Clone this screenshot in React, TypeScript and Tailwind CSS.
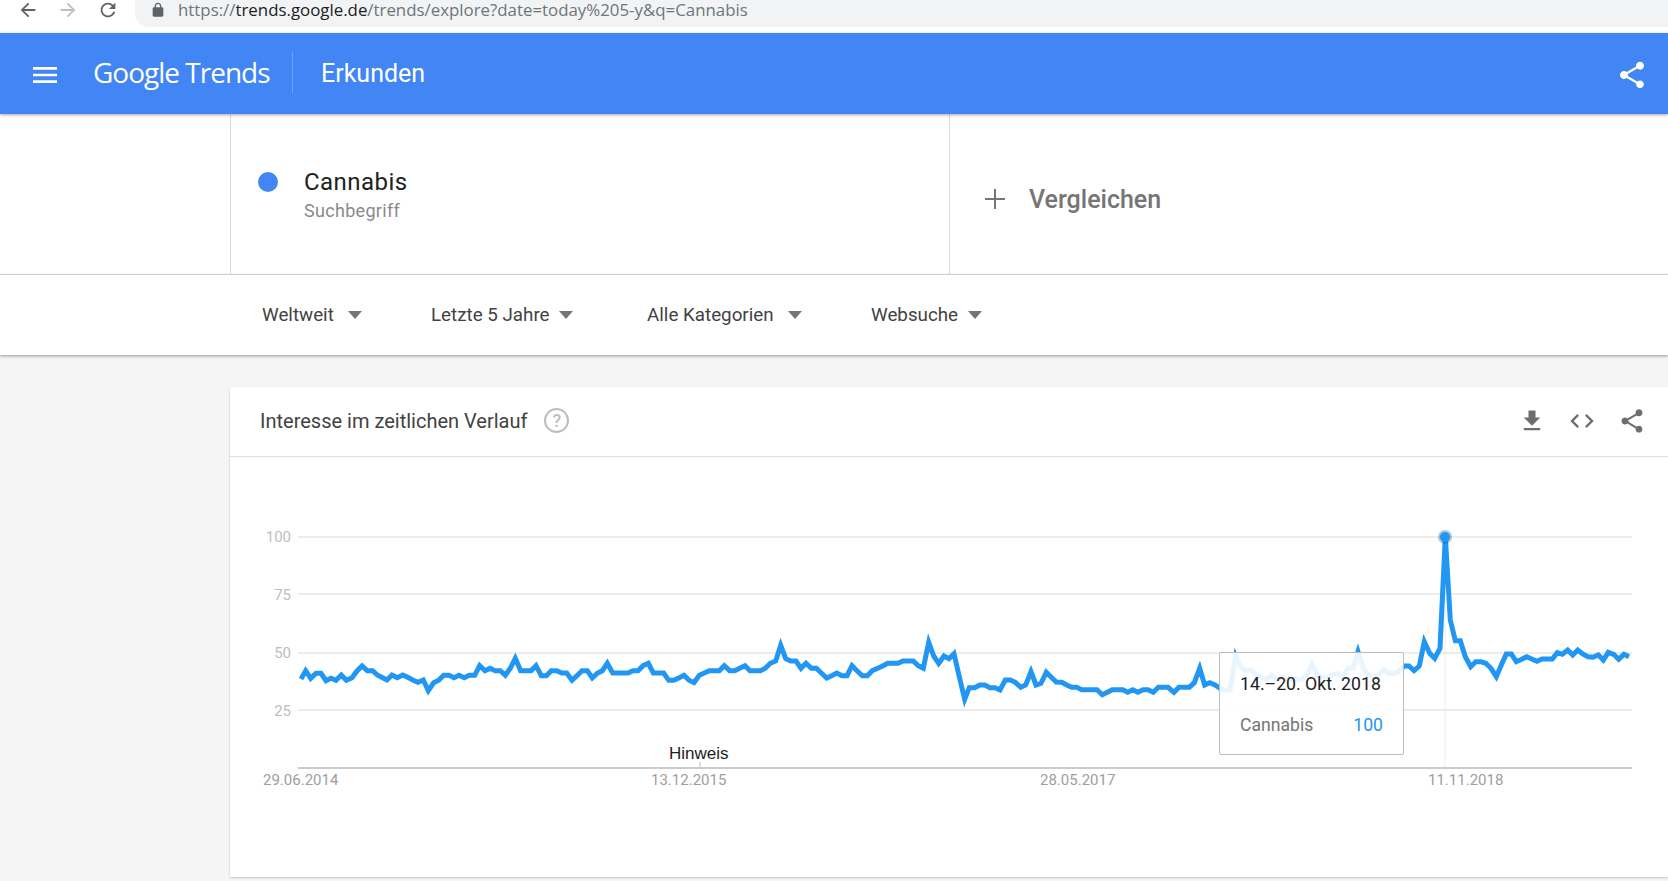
import React from "react";

const roboto = "font-['Roboto',sans-serif]";

// chart samples read off the reference, as [x, y] pairs in 3x crops
const part1 = [243,537,257,512,272,535,288,520,303,520,318,542,333,535,348,541,364,525,379,541,396,533,411,513,426,498,442,512,458,512,472,525,488,533,501,540,516,525,532,533,548,525,563,532,578,540,594,547,610,540,625,572,641,548,656,541,671,526,687,526,702,533,717,526,733,533,748,526,764,526,779,497,795,512,810,505,826,512,841,512,856,526,871,505,886,475,902,512,917,512,933,512,948,497,964,527,979,527,994,512,1010,512,1025,519,1040,519,1056,541,1071,527,1086,512,1102,512,1117,534,1132,520,1147,512,1162,490,1178,519,1193,519,1208,519,1224,519,1239,512,1254,512,1269,497,1285,490,1300,519,1316,519,1331,519,1346,541,1361,541,1376,534,1392,526,1407,541,1422,548,1438,526,1453,519,1468,512,1483,512,1498,512];
const part2 = [73,497,89,512,104,512,119,505,135,497,150,512,165,512,181,512,196,505,211,490,227,483,242,436,257,476,272,483,288,483,303,505,318,490,334,505,349,505,364,519,380,534,395,527,410,519,426,527,441,527,456,497,471,512,487,527,502,527,517,512,533,505,548,498,563,490,578,490,594,490,609,483,624,483,640,483,655,497,670,505,686,427,701,468,716,490,732,468,747,476,762,461,778,530,794,598,808,563,824,563,839,555,854,555,870,563,885,563,900,570,916,540,931,540,946,547,962,562,977,555,993,515,1008,555,1023,550,1039,517,1054,532,1069,546,1085,547,1100,555,1115,562,1130,562,1145,569,1161,569,1176,569,1191,569,1207,584,1222,577,1237,569,1253,569,1268,569,1283,577,1298,569,1314,577,1329,569,1344,569,1360,577,1375,562,1390,562];
const part3 = [0,562,18,577,33,562,48,562,64,562,79,548,95,505,110,555,125,548,141,555,156,565,171,570,186,570,203,468,218,500,233,513,249,510,264,525,279,531,295,538,310,525,325,538,340,531,356,538,371,538,386,538,402,538,417,525,432,493,448,525,463,531,478,531,494,525,509,520,524,531,540,505,555,505,570,455,586,505,601,525,616,531,631,525,647,510,662,520,677,520,692,515,708,498,723,498,738,512,754,498,769,425,785,460,800,475,816,445,832,110,847,360,862,422,877,422,892,470,908,500,923,485,938,485,953,490,969,505,985,530,1000,495,1015,462,1030,462,1045,485,1061,478,1076,470,1091,477,1107,484,1122,477,1137,477,1153,477,1168,458,1183,463,1199,450,1214,465,1229,450,1244,462,1260,470,1275,472,1291,465,1306,480,1321,457,1337,463,1352,478,1368,463,1383,470];

const toPoints = (arr: number[], offset: number) => {
  const out: string[] = [];
  for (let i = 0; i < arr.length; i += 2) {
    out.push(`${(offset + arr[i] / 3).toFixed(1)},${(500 + arr[i + 1] / 3).toFixed(1)}`);
  }
  return out;
};

const linePoints = [...toPoints(part1, 220), ...toPoints(part2, 700), ...toPoints(part3, 1168)].join(" ");

const Icon = ({ d, className }: { d: string; className: string }) => (
  <svg viewBox="0 0 24 24" className={className} fill="currentColor">
    <path d={d} />
  </svg>
);

const SHARE =
  "M18 16.08c-.76 0-1.44.3-1.96.77L8.91 12.7c.05-.23.09-.46.09-.7s-.04-.47-.09-.7l7.05-4.11c.54.5 1.25.81 2.04.81 1.66 0 3-1.34 3-3s-1.34-3-3-3-3 1.34-3 3c0 .24.04.47.09.7L8.04 9.81C7.5 9.31 6.79 9 6 9c-1.66 0-3 1.34-3 3s1.34 3 3 3c.79 0 1.5-.31 2.04-.81l7.12 4.16c-.05.21-.08.43-.08.65 0 1.61 1.31 2.92 2.92 2.92s2.92-1.31 2.92-2.92-1.31-2.92-2.92-2.92z";

const Caret = () => (
  <svg viewBox="0 0 14 8" className="w-[14px] h-[8px] text-[#757575]" fill="currentColor">
    <path d="M0 0h14L7 8z" />
  </svg>
);

const filters = [
  { label: "Weltweit", cls: "w-[169px]", gap: "gap-[14px]" },
  { label: "Letzte 5 Jahre", cls: "w-[216px]", gap: "gap-[9px]" },
  { label: "Alle Kategorien", cls: "w-[224px]", gap: "gap-[14px]" },
  { label: "Websuche", cls: "w-[120px]", gap: "gap-[10px]" },
];

const Chart = () => (
  <svg viewBox="230 457 1438 420" className="w-[1438px] h-[420px] block">
    {[537, 594, 653, 710].map((y) => (
      <line key={y} x1="298" x2="1632" y1={y} y2={y} stroke="#e6e6e6" strokeWidth="1.5" />
    ))}
    <line x1="298" x2="1632" y1="768" y2="768" stroke="#cccccc" strokeWidth="2" />
    <line x1="700" x2="700" y1="762" y2="767" stroke="#bdbdbd" strokeWidth="1" />
    <line x1="1445" x2="1445" y1="537" y2="767" stroke="#eeeeee" strokeWidth="1" />
    <g fontFamily="Roboto, sans-serif" fontSize="15" fill="#bdbdbd" textAnchor="end">
      <text x="291" y="542">100</text>
      <text x="291" y="600">75</text>
      <text x="291" y="658">50</text>
      <text x="291" y="716">25</text>
    </g>
    <g fontFamily="Roboto, sans-serif" fontSize="15" fill="#9e9e9e">
      <text x="263" y="785">29.06.2014</text>
      <text x="651" y="785">13.12.2015</text>
      <text x="1040" y="785">28.05.2017</text>
      <text x="1428" y="785">11.11.2018</text>
    </g>
    <text x="669" y="759" fontFamily="Liberation Sans, sans-serif" fontSize="17" fill="#222222">
      Hinweis
    </text>
    <polyline points={linePoints} fill="none" stroke="#2196f3" strokeWidth="5" strokeLinejoin="miter" />
    <circle cx="1445" cy="537" r="7" fill="#1a5f99" opacity="0.35" />
    <circle cx="1445" cy="537" r="5" fill="#2196f3" />
  </svg>
);

export default function App() {
  return (
    <div className={`relative w-full h-[881px] overflow-hidden bg-[#f5f5f5] ${roboto}`}>
      {/* browser bar */}
      <div className="h-[33px] bg-white flex items-start">
        <div className="flex items-center h-[20px] pl-[17px] gap-[18px] w-[135px]">
          <Icon className="w-[22px] h-[22px] text-[#5f6368]" d="M20 11H7.83l5.59-5.59L12 4l-8 8 8 8 1.41-1.41L7.83 13H20v-2z" />
          <Icon className="w-[22px] h-[22px] text-[#bdc1c6]" d="M12 4l-1.41 1.41L16.17 11H4v2h12.17l-5.58 5.59L12 20l8-8z" />
          <Icon className="w-[22px] h-[22px] text-[#5f6368]" d="M17.65 6.35C16.2 4.9 14.21 4 12 4c-4.42 0-7.99 3.58-7.99 8s3.57 8 7.99 8c3.73 0 6.84-2.55 7.73-6h-2.08c-.82 2.33-3.04 4-5.65 4-3.31 0-6-2.69-6-6s2.69-6 6-6c1.66 0 3.14.69 4.22 1.78L13 11h7V4l-2.35 2.35z" />
        </div>
        <div className="flex-1 h-[27px] bg-[#f1f3f4] rounded-bl-[14px] flex items-start pl-[15px]">
          <svg viewBox="0 0 24 24" className="w-[16px] h-[16px] mt-[2px] text-[#5f6368]" fill="currentColor">
            <path d="M18 8h-1V6c0-2.76-2.24-5-5-5S7 3.24 7 6v2H6c-1.1 0-2 .9-2 2v10c0 1.1.9 2 2 2h12c1.1 0 2-.9 2-2V10c0-1.1-.9-2-2-2zM9 8V6c0-1.66 1.34-3 3-3s3 1.34 3 3v2H9z" />
          </svg>
          <p className="ml-[12px] text-[16.85px] leading-[20px] whitespace-nowrap text-[#70757a] font-['Open_Sans',sans-serif]">
            https://<span className="text-[#202124]">trends.google.de</span>/trends/explore?date=today%205-y&amp;q=Cannabis
          </p>
        </div>
      </div>

      {/* header */}
      <header className="relative z-20 h-[81px] bg-[#4285f4] flex items-center shadow-[0_1px_3px_rgba(0,0,0,0.35)] text-white">
        <Icon className="ml-[29px] mt-[3px] w-[32px] h-[32px]" d="M3 18h18v-2H3v2zm0-5h18v-2H3v2zm0-7v2h18V6H3z" />
        <p className="ml-[32px] w-[199px] -mt-[4px] text-[28px] tracking-[-1px] whitespace-nowrap font-['Open_Sans',sans-serif]">
          Google <span>Trends</span>
        </p>
        <div className="h-[41px] w-px bg-white/25 -mt-[3px]" />
        <p className="ml-[28px] mt-[1px] text-[25px]">Erkunden</p>
        <Icon className="ml-auto mr-[20px] mt-[3px] w-[32px] h-[32px]" d={SHARE} />
      </header>

      {/* search term row */}
      <div className="h-[161px] bg-white flex border-b border-[#dcdcdc]">
        <div className="w-[231px] border-r border-[#dcdcdc]" />
        <div className="w-[719px] border-r border-[#dcdcdc] flex pl-[27px] pt-[48px]">
          <div className="mt-[10px] w-[20px] h-[20px] rounded-full bg-[#4285f4]" />
          <div className="ml-[26px]">
            <p className="text-[24px] leading-[41px] tracking-[0.45px] text-[#212121]">Cannabis</p>
            <p className="text-[18px] leading-[16px] tracking-[0.3px] text-[#8a8a8a]">Suchbegriff</p>
          </div>
        </div>
        <div className="flex-1 flex items-center pl-[35px] pt-[11px]">
          <svg viewBox="0 0 20 20" className="w-[20px] h-[20px] -mt-[2px] text-[#757575]" fill="currentColor">
            <path d="M9 0h2v9h9v2h-9v9H9v-9H0V9h9z" />
          </svg>
          <p className="ml-[24px] text-[25px] font-medium text-[#757575]">Vergleichen</p>
        </div>
      </div>

      {/* filters */}
      <div className="relative z-10 h-[80px] bg-white flex items-center pl-[262px] shadow-[0_1px_3px_rgba(0,0,0,0.4)]">
        {filters.map((f) => (
          <div key={f.label} className={`flex items-center ${f.gap} ${f.cls}`}>
            <span className="text-[18.8px] text-[#424242] whitespace-nowrap">{f.label}</span>
            <Caret />
          </div>
        ))}
      </div>

      {/* interest card */}
      <div className="ml-[230px] mt-[32px] h-[490px] bg-white shadow-[0_1px_2px_rgba(0,0,0,0.2)]">
        <div className="relative h-[70px] border-b border-[#e0e0e0] flex items-center pl-[30px] pb-[2px]">
          <h2 className="text-[20px] text-[#424242] whitespace-nowrap">Interesse im zeitlichen Verlauf</h2>
          <div className="ml-[17px] w-[25px] h-[25px] rounded-full border-[2px] border-[#bdbdbd] flex items-center justify-center text-[18px] font-medium text-[#bdbdbd]">
            ?
          </div>
          <div className="ml-auto mr-[22px] flex items-center gap-[22px] text-[#6e6e6e]">
            <Icon className="w-[28px] h-[28px]" d="M19 9h-4V3H9v6H5l7 7 7-7zM5 18v2h14v-2H5z" />
            <Icon className="w-[28px] h-[28px]" d="M9.4 16.6L4.8 12l4.6-4.6L8 6l-6 6 6 6 1.4-1.4zm5.2 0l4.6-4.6-4.6-4.6L16 6l6 6-6 6-1.4-1.4z" />
            <Icon className="w-[28px] h-[28px]" d={SHARE} />
          </div>
        </div>
        <Chart />
      </div>

      {/* chart tooltip */}
      <div className="absolute left-[1219px] top-[652px] w-[185px] h-[103px] rounded-[2px] border border-[#bdbdbd] bg-white/90 pl-[20px] pt-[18px]">
        <p className="text-[17.7px] leading-[26px] text-[#212121] whitespace-nowrap">14.–20. Okt. 2018</p>
        <div className="mt-[15px] flex justify-between pr-[20px] text-[17.6px] leading-[26px]">
          <span className="text-[#757575]">Cannabis</span>
          <span className="text-[#2196f3]">100</span>
        </div>
      </div>
    </div>
  );
}
